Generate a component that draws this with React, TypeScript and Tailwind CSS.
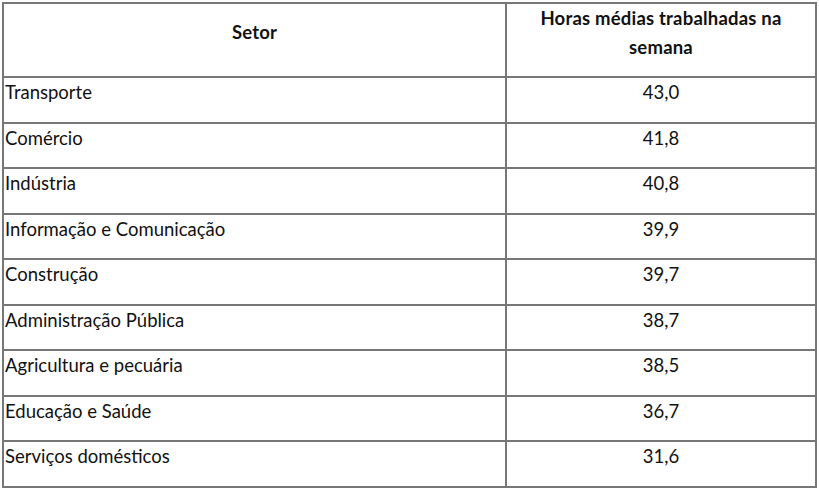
const rows: [string, string][] = [
  ["Transporte", "43,0"],
  ["Comércio", "41,8"],
  ["Indústria", "40,8"],
  ["Informação e Comunicação", "39,9"],
  ["Construção", "39,7"],
  ["Administração Pública", "38,7"],
  ["Agricultura e pecuária", "38,5"],
  ["Educação e Saúde", "36,7"],
  ["Serviços domésticos", "31,6"],
];

export default function App() {
  return (
    <div className="w-[819px] h-[488px] bg-white pl-[2px] pt-[2px] font-['Lato',sans-serif] text-[#111]">
      <table className="w-[815px] border-collapse">
        <thead>
          <tr className="h-[74px]">
            <th className="w-[503px] border-2 border-[#777] text-[18.5px] font-bold tracking-[0.2px] align-top pt-[14px] leading-[29px]">
              Setor
            </th>
            <th className="border-2 border-[#777] text-[18.5px] font-bold tracking-[0.2px] leading-[29px] px-6 align-top pt-0">
              Horas médias trabalhadas na semana
            </th>
          </tr>
        </thead>
        <tbody>
          {rows.map(([setor, horas]) => (
            <tr key={setor} className="h-[45.5px]">
              <td className="border-2 border-[#777] align-top pt-[2px] pl-[1px] text-[18.5px] leading-[24px]">
                {setor}
              </td>
              <td className="border-2 border-[#777] align-top pt-[2px] text-center text-[18.5px] leading-[24px]">
                {horas}
              </td>
            </tr>
          ))}
        </tbody>
      </table>
    </div>
  );
}
